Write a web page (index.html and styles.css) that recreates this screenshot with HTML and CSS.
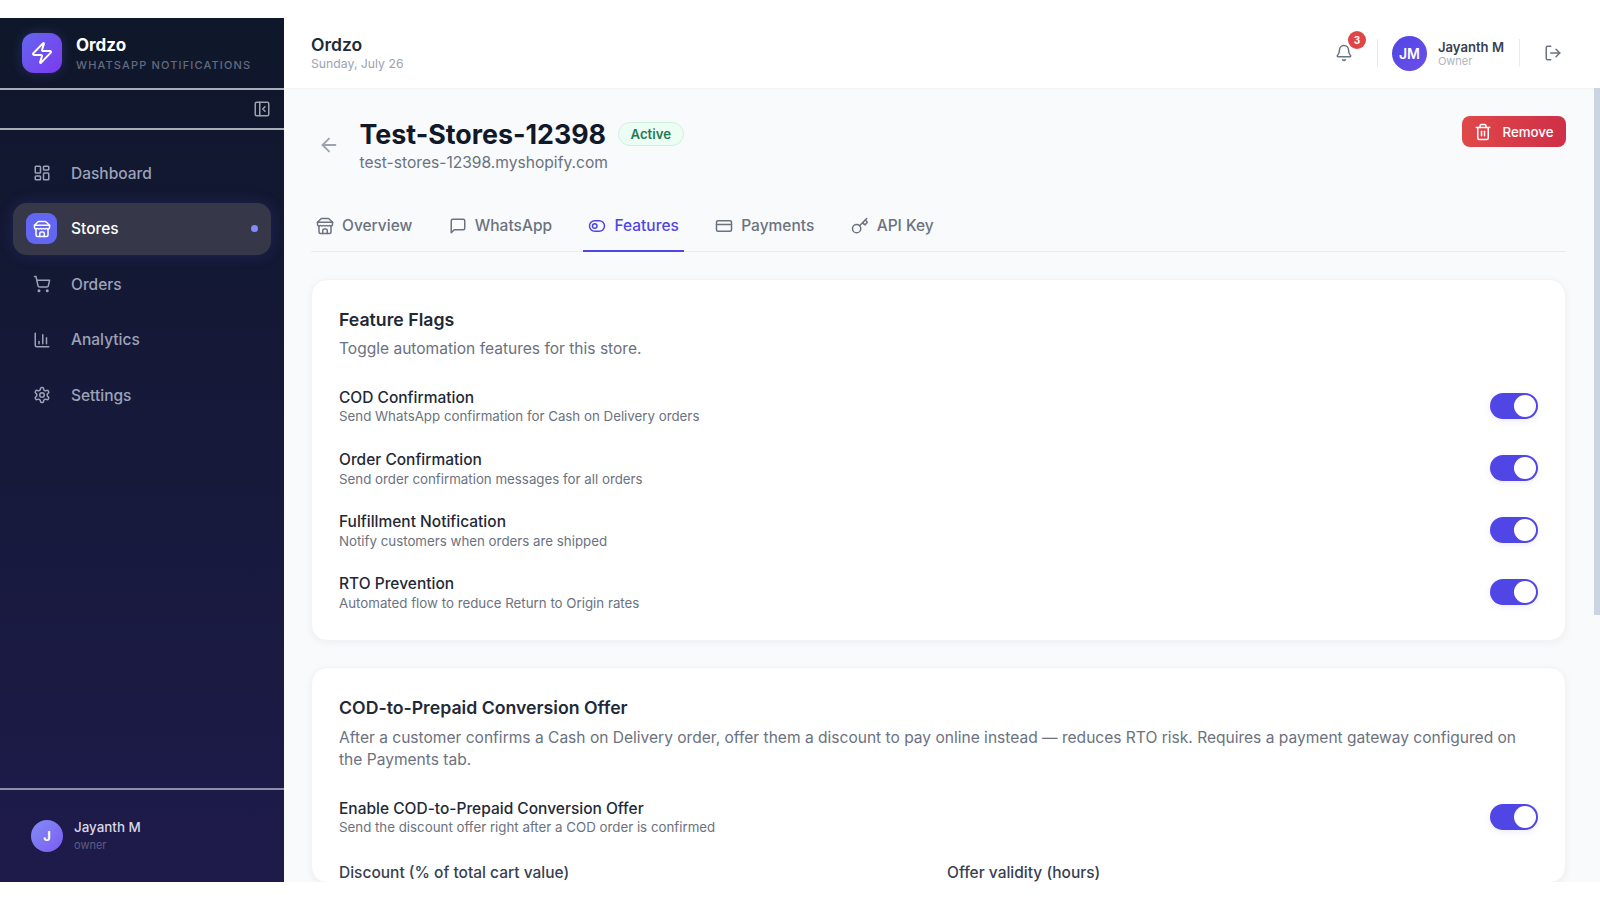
FILE: index.html
```html
<!DOCTYPE html>
<html lang="en">
<head>
    <meta charset="UTF-8">
    <meta name="viewport" content="width=device-width, initial-scale=1.0">
    <title>Ordzo</title>
    <link rel="stylesheet" href="styles.css">
</head>
<body>
    <div class="app">
        <aside class="sidebar">
            <div class="brand">
                <div class="brand-logo">
                    <svg class="icon" width="24" height="24" viewBox="0 0 24 24"><path d="M4 14a1 1 0 0 1-.78-1.63l9.9-10.2a.5.5 0 0 1 .86.46l-1.92 6.02A1 1 0 0 0 13 10h7a1 1 0 0 1 .78 1.63l-9.9 10.2a.5.5 0 0 1-.86-.46l1.92-6.02A1 1 0 0 0 11 14z"/></svg>
                </div>
                <div>
                    <div class="brand-name">Ordzo</div>
                    <div class="brand-sub">WHATSAPP NOTIFICATIONS</div>
                </div>
            </div>
            <div class="collapse-row">
                <svg class="icon" width="18" height="18" viewBox="0 0 24 24"><rect x="3" y="3" width="18" height="18" rx="2"/><path d="M9 3v18"/><path d="m16 15-3-3 3-3"/></svg>
            </div>
            <nav class="nav">
                <a class="nav-item">
                    <span class="nav-icon"><svg class="icon" width="18" height="18" viewBox="0 0 24 24"><rect x="3" y="3" width="7" height="9" rx="1"/><rect x="14" y="3" width="7" height="5" rx="1"/><rect x="14" y="12" width="7" height="9" rx="1"/><rect x="3" y="16" width="7" height="5" rx="1"/></svg></span>
                    Dashboard
                </a>
                <a class="nav-item active">
                    <span class="nav-icon"><svg class="icon" width="18" height="18" viewBox="0 0 24 24"><path d="m2 7 4.41-4.41A2 2 0 0 1 7.83 2h8.34a2 2 0 0 1 1.42.59L22 7"/><path d="M4 12v8a2 2 0 0 0 2 2h12a2 2 0 0 0 2-2v-8"/><path d="M15 22v-4a2 2 0 0 0-2-2h-2a2 2 0 0 0-2 2v4"/><path d="M2 7h20"/><path d="M22 7v3a2 2 0 0 1-2 2a2.7 2.7 0 0 1-1.59-.63.7.7 0 0 0-.82 0A2.7 2.7 0 0 1 16 12a2.7 2.7 0 0 1-1.59-.63.7.7 0 0 0-.82 0A2.7 2.7 0 0 1 12 12a2.7 2.7 0 0 1-1.59-.63.7.7 0 0 0-.82 0A2.7 2.7 0 0 1 8 12a2.7 2.7 0 0 1-1.59-.63.7.7 0 0 0-.82 0A2.7 2.7 0 0 1 4 12a2 2 0 0 1-2-2V7"/></svg></span>
                    Stores
                    <span class="nav-dot"></span>
                </a>
                <a class="nav-item">
                    <span class="nav-icon"><svg class="icon" width="18" height="18" viewBox="0 0 24 24"><circle cx="8" cy="21" r="1"/><circle cx="19" cy="21" r="1"/><path d="M2.05 2.05h2l2.66 12.42a2 2 0 0 0 2 1.58h9.78a2 2 0 0 0 1.95-1.57l1.65-7.43H5.12"/></svg></span>
                    Orders
                </a>
                <a class="nav-item">
                    <span class="nav-icon"><svg class="icon" width="18" height="18" viewBox="0 0 24 24"><path d="M3 3v16a2 2 0 0 0 2 2h16"/><path d="M18 17V9"/><path d="M13 17V5"/><path d="M8 17v-3"/></svg></span>
                    Analytics
                </a>
                <a class="nav-item">
                    <span class="nav-icon"><svg class="icon" width="18" height="18" viewBox="0 0 24 24"><path d="M12.22 2h-.44a2 2 0 0 0-2 2v.18a2 2 0 0 1-1 1.73l-.43.25a2 2 0 0 1-2 0l-.15-.08a2 2 0 0 0-2.73.73l-.22.38a2 2 0 0 0 .73 2.73l.15.1a2 2 0 0 1 1 1.72v.51a2 2 0 0 1-1 1.74l-.15.09a2 2 0 0 0-.73 2.73l.22.38a2 2 0 0 0 2.73.73l.15-.08a2 2 0 0 1 2 0l.43.25a2 2 0 0 1 1 1.73V20a2 2 0 0 0 2 2h.44a2 2 0 0 0 2-2v-.18a2 2 0 0 1 1-1.73l.43-.25a2 2 0 0 1 2 0l.15.08a2 2 0 0 0 2.73-.73l.22-.39a2 2 0 0 0-.73-2.73l-.15-.08a2 2 0 0 1-1-1.74v-.5a2 2 0 0 1 1-1.74l.15-.09a2 2 0 0 0 .73-2.73l-.22-.38a2 2 0 0 0-2.73-.73l-.15.08a2 2 0 0 1-2 0l-.43-.25a2 2 0 0 1-1-1.73V4a2 2 0 0 0-2-2z"/><circle cx="12" cy="12" r="3"/></svg></span>
                    Settings
                </a>
            </nav>
            <div class="side-user">
                <div class="side-avatar">J</div>
                <div>
                    <div class="side-name">Jayanth M</div>
                    <div class="side-role">owner</div>
                </div>
            </div>
        </aside>

        <div class="content">
            <header class="topbar">
                <div class="topbar-title">
                    <div class="topbar-name">Ordzo</div>
                    <div class="topbar-date">Sunday, July 26</div>
                </div>
                <div class="topbar-right">
                    <div class="bell">
                        <svg class="icon" width="18" height="18" viewBox="0 0 24 24"><path d="M10.268 21a2 2 0 0 0 3.464 0"/><path d="M3.262 15.326A1 1 0 0 0 4 17h16a1 1 0 0 0 .74-1.673C19.41 13.956 18 12.499 18 8A6 6 0 0 0 6 8c0 4.499-1.411 5.956-2.738 7.326"/></svg>
                        <span class="bell-badge">3</span>
                    </div>
                    <div class="topbar-sep"></div>
                    <div class="top-avatar">JM</div>
                    <div class="top-user">
                        <div class="top-name">Jayanth M</div>
                        <div class="top-role">Owner</div>
                    </div>
                    <div class="topbar-sep"></div>
                    <svg class="icon logout" width="18" height="18" viewBox="0 0 24 24"><path d="M9 21H5a2 2 0 0 1-2-2V5a2 2 0 0 1 2-2h4"/><path d="m16 17 5-5-5-5"/><path d="M21 12H9"/></svg>
                </div>
            </header>

            <main class="main">
                <div class="page-head">
                    <svg class="icon back" width="22" height="22" viewBox="0 0 24 24"><path d="m12 19-7-7 7-7"/><path d="M19 12H5"/></svg>
                    <div class="page-title">
                        <div class="title-row">
                            <h1>Test-Stores-12398</h1>
                            <span class="status">Active</span>
                        </div>
                        <div class="domain">test-stores-12398.myshopify.com</div>
                    </div>
                    <button type="button" class="remove">
                        <svg class="icon" width="18" height="18" viewBox="0 0 24 24"><path d="M3 6h18"/><path d="M19 6v14c0 1-1 2-2 2H7c-1 0-2-1-2-2V6"/><path d="M8 6V4c0-1 1-2 2-2h4c1 0 2 1 2 2v2"/><path d="M10 11v6"/><path d="M14 11v6"/></svg>
                        Remove
                    </button>
                </div>

                <div class="tabs">
                    <a class="tab">
                        <svg class="icon" width="18" height="18" viewBox="0 0 24 24"><path d="m2 7 4.41-4.41A2 2 0 0 1 7.83 2h8.34a2 2 0 0 1 1.42.59L22 7"/><path d="M4 12v8a2 2 0 0 0 2 2h12a2 2 0 0 0 2-2v-8"/><path d="M15 22v-4a2 2 0 0 0-2-2h-2a2 2 0 0 0-2 2v4"/><path d="M2 7h20"/><path d="M22 7v3a2 2 0 0 1-2 2a2.7 2.7 0 0 1-1.59-.63.7.7 0 0 0-.82 0A2.7 2.7 0 0 1 16 12a2.7 2.7 0 0 1-1.59-.63.7.7 0 0 0-.82 0A2.7 2.7 0 0 1 12 12a2.7 2.7 0 0 1-1.59-.63.7.7 0 0 0-.82 0A2.7 2.7 0 0 1 8 12a2.7 2.7 0 0 1-1.59-.63.7.7 0 0 0-.82 0A2.7 2.7 0 0 1 4 12a2 2 0 0 1-2-2V7"/></svg>
                        Overview
                    </a>
                    <a class="tab">
                        <svg class="icon" width="18" height="18" viewBox="0 0 24 24"><path d="M21 15a2 2 0 0 1-2 2H7l-4 4V5a2 2 0 0 1 2-2h14a2 2 0 0 1 2 2z"/></svg>
                        WhatsApp
                    </a>
                    <a class="tab active">
                        <svg class="icon" width="18" height="18" viewBox="0 0 24 24"><circle cx="9" cy="12" r="3"/><rect x="2" y="5" width="20" height="14" rx="7"/></svg>
                        Features
                    </a>
                    <a class="tab">
                        <svg class="icon" width="18" height="18" viewBox="0 0 24 24"><rect x="2" y="5" width="20" height="14" rx="2"/><path d="M2 10h20"/></svg>
                        Payments
                    </a>
                    <a class="tab">
                        <svg class="icon" width="18" height="18" viewBox="0 0 24 24"><path d="m15.5 7.5 2.3 2.3a1 1 0 0 0 1.4 0l2.1-2.1a1 1 0 0 0 0-1.4L19 4"/><path d="m21 2-9.6 9.6"/><circle cx="7.5" cy="15.5" r="5.5"/></svg>
                        API Key
                    </a>
                </div>

                <section class="card">
                    <h2>Feature Flags</h2>
                    <p class="card-desc">Toggle automation features for this store.</p>
                    <div class="flags">
                        <div class="flag">
                            <div>
                                <div class="flag-name">COD Confirmation</div>
                                <div class="flag-desc">Send WhatsApp confirmation for Cash on Delivery orders</div>
                            </div>
                            <span class="toggle"></span>
                        </div>
                        <div class="flag">
                            <div>
                                <div class="flag-name">Order Confirmation</div>
                                <div class="flag-desc">Send order confirmation messages for all orders</div>
                            </div>
                            <span class="toggle"></span>
                        </div>
                        <div class="flag">
                            <div>
                                <div class="flag-name">Fulfillment Notification</div>
                                <div class="flag-desc">Notify customers when orders are shipped</div>
                            </div>
                            <span class="toggle"></span>
                        </div>
                        <div class="flag">
                            <div>
                                <div class="flag-name">RTO Prevention</div>
                                <div class="flag-desc">Automated flow to reduce Return to Origin rates</div>
                            </div>
                            <span class="toggle"></span>
                        </div>
                    </div>
                </section>

                <section class="card">
                    <h2>COD-to-Prepaid Conversion Offer</h2>
                    <p class="card-desc">After a customer confirms a Cash on Delivery order, offer them a discount to pay online instead — reduces RTO risk. Requires a payment gateway configured on the Payments tab.</p>
                    <div class="flags">
                        <div class="flag">
                            <div>
                                <div class="flag-name">Enable COD-to-Prepaid Conversion Offer</div>
                                <div class="flag-desc">Send the discount offer right after a COD order is confirmed</div>
                            </div>
                            <span class="toggle"></span>
                        </div>
                    </div>
                    <div class="offer-fields">
                        <label>Discount (% of total cart value)</label>
                        <label>Offer validity (hours)</label>
                    </div>
                </section>
            </main>
            <div class="scroll-thumb"></div>
        </div>
    </div>
</body>
</html>
```

FILE: styles.css
```css
* {
    box-sizing: border-box;
}

html, body {
    height: 100%;
}

body {
    font-family: Inter, "Liberation Sans", sans-serif;
    background-color: #fff;
    margin: 0;
    padding: 18px 0;
    overflow: hidden;
}

.app {
    display: flex;
    height: 864px;
    overflow: hidden;
}

.icon {
    fill: none;
    stroke: currentColor;
    stroke-width: 2;
    stroke-linecap: round;
    stroke-linejoin: round;
    flex: none;
    display: block;
}

/* sidebar */
.sidebar {
    width: 284px;
    flex: none;
    display: flex;
    flex-direction: column;
    background: linear-gradient(180deg, #0f172a, #1e1b4b);
}

.brand {
    height: 72px;
    display: flex;
    align-items: center;
    gap: 14px;
    padding: 0 22px;
    border-bottom: 2px solid #a9adb8;
}

.brand-logo {
    width: 40px;
    height: 40px;
    border-radius: 12px;
    background: linear-gradient(135deg, #6366f1, #7c3aed);
    color: #fff;
    display: flex;
    align-items: center;
    justify-content: center;
    box-shadow: 0 0 12px rgba(99, 102, 241, 0.25);
}

.brand-name {
    color: #fff;
    font-size: 17px;
    font-weight: 700;
    line-height: 22px;
}

.brand-sub {
    margin-top: 1px;
    color: #646a80;
    font-size: 11px;
    font-weight: 500;
    letter-spacing: 1.15px;
    line-height: 16px;
}

.collapse-row {
    height: 40px;
    display: flex;
    align-items: center;
    justify-content: flex-end;
    padding: 0 13px;
    color: #9ca3af;
    border-bottom: 2px solid #a9adb8;
}

.nav {
    flex: 1;
    padding: 17px 13px;
    display: flex;
    flex-direction: column;
    gap: 3px;
}

.nav-item {
    height: 52.5px;
    display: flex;
    align-items: center;
    gap: 14px;
    padding: 0 13px;
    border-radius: 14px;
    color: #9ca3b8;
    font-size: 15.5px;
    font-weight: 500;
}

.nav-icon {
    width: 31px;
    height: 31px;
    border-radius: 9px;
    display: flex;
    align-items: center;
    justify-content: center;
}

.nav-item.active {
    background: #363849;
    color: #fff;
    box-shadow: 0 0 16px rgba(99, 102, 241, 0.18);
}

.nav-item.active .nav-icon {
    background: #6366f1;
}

.nav-dot {
    width: 7px;
    height: 7px;
    border-radius: 50%;
    background: #818cf8;
    margin-left: auto;
}

.side-user {
    height: 94px;
    display: flex;
    align-items: center;
    gap: 11px;
    padding: 0 31px;
    border-top: 2px solid #8e8ca8;
}

.side-avatar {
    width: 32px;
    height: 32px;
    border-radius: 50%;
    background: linear-gradient(135deg, #818cf8, #7c5cf0);
    color: #fff;
    font-size: 13px;
    font-weight: 700;
    display: flex;
    align-items: center;
    justify-content: center;
}

.side-name {
    color: #d8d8e6;
    font-size: 13.4px;
    font-weight: 500;
    line-height: 18px;
}

.side-role {
    color: #5e5c80;
    font-size: 11px;
    line-height: 18px;
}

/* top bar */
.content {
    flex: 1;
    min-width: 0;
    display: flex;
    flex-direction: column;
    position: relative;
}

.topbar {
    height: 70px;
    flex: none;
    background: #fff;
    display: flex;
    align-items: center;
    justify-content: space-between;
    padding: 0 38px 0 27px;
    box-shadow: 0 1px 2px rgba(0, 0, 0, 0.04);
    position: relative;
}

.topbar-title {
    padding-bottom: 2px;
}

.topbar-name {
    color: #1f2937;
    font-size: 17.5px;
    font-weight: 600;
    line-height: 22px;
}

.topbar-date {
    color: #9ca3af;
    font-size: 12.25px;
    line-height: 15px;
}

.topbar-right {
    display: flex;
    align-items: center;
}

.bell {
    position: relative;
    color: #6b7280;
    margin-right: 24px;
}

.bell-badge {
    position: absolute;
    top: -13px;
    left: 13px;
    width: 18px;
    height: 18px;
    border-radius: 50%;
    background: #e04545;
    color: #fff;
    font-size: 10px;
    font-weight: 700;
    display: flex;
    align-items: center;
    justify-content: center;
}

.topbar-sep {
    width: 1px;
    height: 28px;
    background: #e9ebef;
}

.top-avatar {
    width: 35px;
    height: 35px;
    border-radius: 50%;
    margin-left: 14px;
    background: linear-gradient(135deg, #4f46e5, #6d4fe8);
    color: #fff;
    font-size: 14px;
    font-weight: 600;
    display: flex;
    align-items: center;
    justify-content: center;
}

.top-user {
    margin: 0 15px 0 11px;
}

.top-name {
    color: #374151;
    font-size: 13.1px;
    font-weight: 600;
    line-height: 16px;
}

.top-role {
    color: #b0b5bf;
    font-size: 11px;
    line-height: 13px;
}

.logout {
    color: #6b7280;
    margin-left: 24px;
}

/* page */
.main {
    flex: 1;
    min-height: 0;
    overflow: hidden;
    background: #f8fafc;
    padding: 28px 34px 0 27px;
}

.scroll-thumb {
    position: absolute;
    top: 70px;
    right: 0;
    width: 6px;
    height: 527px;
    background: #cbd5e1;
}

.page-head {
    display: flex;
    align-items: flex-start;
}

.back {
    color: #9ca3af;
    margin: 18px 20px 0 6.5px;
}

.page-title {
    flex: 1;
    padding-top: 1px;
}

.title-row {
    display: flex;
    align-items: center;
    gap: 12px;
}

h1 {
    margin: 0;
    color: #111827;
    font-size: 26.8px;
    font-weight: 700;
    line-height: 34px;
}

.status {
    height: 24px;
    padding: 0 11.5px;
    border-radius: 12px;
    border: 1px solid #d1f0df;
    background: #ecfdf3;
    color: #1f7a54;
    font-size: 13.2px;
    font-weight: 600;
    display: flex;
    align-items: center;
}

.domain {
    margin-top: 2px;
    color: #6b7280;
    font-size: 15.6px;
    line-height: 20px;
}

.remove {
    height: 31px;
    width: 104px;
    border: none;
    border-radius: 8px;
    background: linear-gradient(90deg, #e04848, #cf2f48);
    color: #fff;
    font-family: inherit;
    font-size: 13.3px;
    font-weight: 500;
    display: flex;
    align-items: center;
    justify-content: center;
    gap: 10px;
}

.tabs {
    display: flex;
    gap: 26.4px;
    margin-top: 28px;
    border-bottom: 1px solid #e9ebef;
}

.tab {
    height: 51px;
    padding: 0 5px;
    margin-bottom: -1px;
    display: flex;
    align-items: center;
    gap: 8px;
    color: #6b7280;
    font-size: 15.5px;
    font-weight: 500;
    border-bottom: 2px solid transparent;
}

.tab.active {
    color: #4f46e5;
    border-bottom-color: #4f46e5;
}

.card {
    margin-top: 26.5px;
    padding: 27px 27px 0;
    background: #fff;
    border: 1px solid #f1f3f6;
    border-radius: 16px;
    box-shadow: 0 2px 8px rgba(0, 0, 0, 0.05);
}

h2 {
    margin: 0;
    padding-top: 1px;
    color: #1f2937;
    font-size: 17.7px;
    font-weight: 600;
    line-height: 24px;
}

.card-desc {
    margin: 6.5px 0 0;
    color: #6b7280;
    font-size: 15.55px;
    line-height: 22.5px;
}

.flags {
    margin-top: 15px;
    padding-bottom: 15.4px;
}

.flag {
    height: 62.2px;
    display: flex;
    align-items: center;
    justify-content: space-between;
}

.flag-name {
    color: #1f2937;
    font-size: 15.5px;
    font-weight: 500;
    line-height: 19.5px;
}

.flag-desc {
    color: #6b7280;
    font-size: 13.3px;
    line-height: 18px;
}

.toggle {
    width: 48px;
    height: 26px;
    margin-bottom: 2px;
    border-radius: 13px;
    background: #4f46e5;
    position: relative;
    box-shadow: 0 2px 6px rgba(79, 70, 229, 0.1);
}

.toggle::after {
    content: "";
    position: absolute;
    top: 2px;
    right: 2px;
    width: 22px;
    height: 22px;
    border-radius: 50%;
    background: #fff;
}

.offer-fields {
    display: grid;
    grid-template-columns: 1fr 1fr;
    gap: 17px;
    color: #374151;
    font-size: 15.5px;
    font-weight: 500;
    line-height: 18px;
}
```
